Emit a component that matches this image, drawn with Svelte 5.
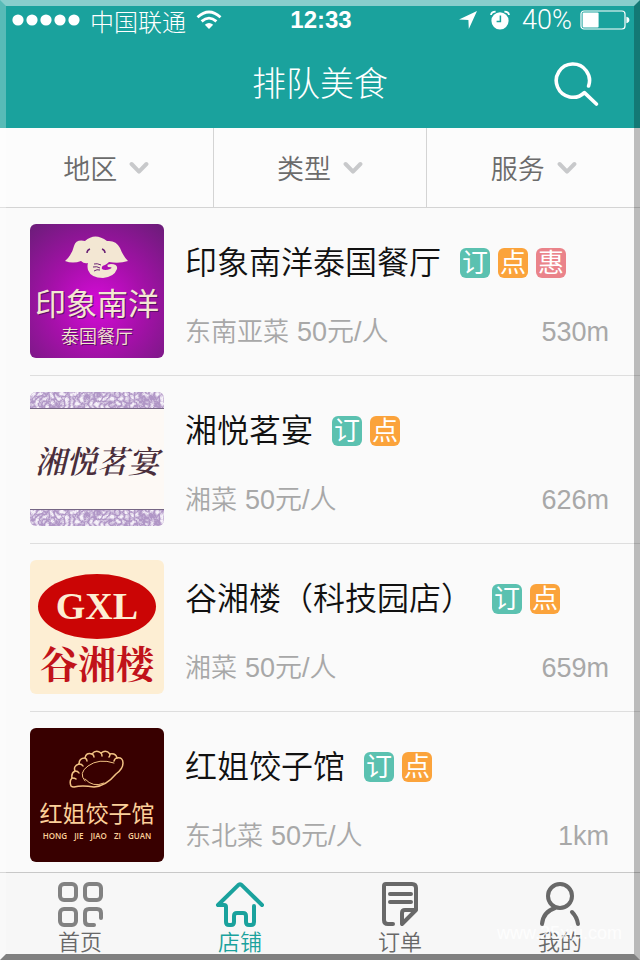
<script>
  const filters = ['地区', '类型', '服务'];

  const tagNames = { order: '订', menu: '点', deal: '惠' };

  const shops = [
    { logo: 'elephant', name: '印象南洋泰国餐厅', tags: ['order', 'menu', 'deal'], cuisine: '东南亚菜', price: 50, distance: '530m' },
    { logo: 'scroll', name: '湘悦茗宴', tags: ['order', 'menu'], cuisine: '湘菜', price: 50, distance: '626m' },
    { logo: 'gxl', name: '谷湘楼（科技园店）', tags: ['order', 'menu'], cuisine: '湘菜', price: 50, distance: '659m' },
    { logo: 'dumpling', name: '红姐饺子馆', tags: ['order', 'menu'], cuisine: '东北菜', price: 50, distance: '1km' }
  ];

  const tabs = [
    { id: 'home', label: '首页' },
    { id: 'shops', label: '店铺' },
    { id: 'orders', label: '订单' },
    { id: 'me', label: '我的' }
  ];

  let active = 'shops';
</script>

<div class="app">
  <header>
    <div class="status">
      <div class="carrier">
        <svg width="68" height="12" viewBox="0 0 68 12" fill="#fff">
          {#each [6, 20, 34, 48, 62] as cx}
            <circle {cx} cy="6" r="5.6" />
          {/each}
        </svg>
        <span>中国联通</span>
        <svg width="26" height="20" viewBox="0 0 26 20" fill="none" stroke="#fff" stroke-width="2.8">
          <path d="M1.5 7.2Q13-3.2 24.5 7.2M5.6 11.4Q13 4.8 20.4 11.4" />
          <path d="M8.8 14.8Q13 11 17.2 14.8L13 19Z" fill="#fff" stroke="none" />
        </svg>
      </div>
      <span class="time">12:33</span>
      <div class="power">
        <svg width="20" height="20" viewBox="0 0 20 20" fill="#fff">
          <path d="M19 1L1 9.4l9.4.6.4 9z" />
        </svg>
        <svg class="alarm" width="20" height="20" viewBox="0 0 20 20">
          <circle cx="10" cy="10.8" r="8.6" fill="#fff" />
          <path d="M1 5Q1.4 1.6 5.6 1.6M19 5Q18.6 1.6 14.4 1.6" fill="none" stroke="#fff" stroke-width="1.8" />
          <path d="M10.4 5.6v6H6.6" fill="none" stroke="#1aa29d" stroke-width="1.5" />
        </svg>
        <span>40%</span>
        <svg width="50" height="20" viewBox="0 0 50 20">
          <rect x="1" y="1" width="44" height="18" rx="3" fill="none" stroke="#fff" stroke-width="1.2" />
          <rect x="2.6" y="2.6" width="16" height="14.8" rx="1" fill="#fff" />
          <path d="M46.4 6.8q3 .6 3 3.2t-3 3.2z" fill="#fff" />
        </svg>
      </div>
    </div>
    <div class="bar">
      <h1>排队美食</h1>
      <button class="search" aria-label="搜索">
        <svg width="46" height="46" viewBox="0 0 46 46" fill="none" stroke="#fff" stroke-width="3.6" stroke-linecap="round" stroke-linejoin="round">
          <path d="M34.6 25A16.6 16.6 0 1 0 30.4 31.6L42.4 43" />
        </svg>
      </button>
    </div>
  </header>

  <div class="filters">
    {#each filters as filter}
      <button>
        {filter}
        <svg width="20" height="14" viewBox="0 0 20 14" fill="none" stroke="#c8c9cb" stroke-width="4" stroke-linecap="round" stroke-linejoin="round">
          <path d="M2.6 3L10 10.6L17.4 3" />
        </svg>
      </button>
    {/each}
  </div>

  <main>
    {#each shops as { logo, name, tags, cuisine, price, distance }}
      <article class="shop">
        <div class="logo {logo}">
          {#if logo === 'elephant'}
            <svg width="64" height="44" viewBox="0 0 64 44">
              <path
                d="M0 26Q7 20 9 11Q11 4 20 6Q30-3 42 6Q51 5 55 13Q58 21 63 26Q54 29 44 27Q42 29 40 30Q36 31 37 34Q40 36 45 34Q49 32 43 32Q41 29 46 29Q53 29 52 34Q49 42 38 43Q26 43 23 35Q22 31 23 28Q19 29 16 26Q8 29 0 26Z"
                fill="#f3e7d3"
              />
              <path d="M22 18q0-3 3-4M37 14q3 1 3 4" fill="none" stroke="#6b2375" stroke-width="1.5" />
              <path d="M29 29q3-1 7 1M28 32q4-1 7 1M29 36q3-2 6-1" fill="none" stroke="#6b2375" />
            </svg>
            <b>印象南洋</b>
            <small>泰国餐厅</small>
          {:else if logo === 'scroll'}
            <svg class="pattern">
              <filter id="brocade" x="0" y="0" width="100%" height="100%">
                <feTurbulence type="turbulence" baseFrequency="0.2" numOctaves="3" seed="4" />
                <feColorMatrix values="0 0 0 0 0.92  0 0 0 0 0.88  0 0 0 0 0.95  0 0 0 2.4 -0.4" />
              </filter>
              <rect width="100%" height="100%" fill="#b096c6" />
              <rect width="100%" height="100%" filter="url(#brocade)" />
            </svg>
            <b>湘悦茗宴</b>
            <svg class="pattern">
              <rect width="100%" height="100%" fill="#b096c6" />
              <rect width="100%" height="100%" filter="url(#brocade)" />
            </svg>
          {:else if logo === 'gxl'}
            <span>GXL</span>
            <b>谷湘楼</b>
          {:else}
            <svg width="58" height="42" viewBox="0 0 58 42" fill="none" stroke="#f1c183" stroke-width="1.5" stroke-linecap="round" stroke-linejoin="round">
              <path d="M3 37Q1 32 4 29Q3 24 7 22Q5 17 11 15Q11 9 17 9Q18 3 24 5Q28 0 33 4Q38 0 42 5Q48 4 49 9Q55 8 55 14Q55 20 48 25Q38 37 26 38Q14 36 6 38Q4 38 3 37Z" />
              <path d="M4 29q3 0 4 1M7 22q3 0 4 2M11 15q3 0 4 2M17 9q2 1 2 3M24 5q2 1 2 3M33 4q1 1 1 3M42 5q0 2-1 3M49 9q-2 0-3 3" />
              <path d="M17 32Q10 24 20 17Q31 9 46 14M17 30q8 9 19 4" stroke-width="1" />
            </svg>
            <b>红姐饺子馆</b>
            <small><i>HONG</i><i>JIE</i><i>JIAO</i><i>ZI</i><i>GUAN</i></small>
          {/if}
        </div>
        <div class="detail">
          <div class="title">
            <h2>{name}</h2>
            {#each tags as tag}
              <span class="tag {tag}">{tagNames[tag]}</span>
            {/each}
          </div>
          <div class="meta">
            <span class="cuisine">{cuisine}</span>
            <span>{price}元/人</span>
            <span class="distance">{distance}</span>
          </div>
        </div>
      </article>
    {/each}
  </main>

  <nav>
    {#each tabs as { id, label }}
      <button class:active={active === id} class={id} on:click={() => (active = id)}>
        <svg width="50" height="48" viewBox="0 0 50 48" fill="none" stroke="currentColor" stroke-width="4" stroke-linecap="round" stroke-linejoin="round">
          {#if id === 'home'}
            <rect x="5" y="3" width="16" height="16" rx="4" />
            <rect x="30" y="3" width="16" height="16" rx="4" />
            <rect x="5" y="28" width="16" height="16" rx="4" />
            <path d="M46 37v-5q0-4-4-4h-8q-4 0-4 4v8q0 4 4 4h5" />
          {:else if id === 'shops'}
            <path d="M47 24L27 4.4Q25 2 23 4.4L3 24H9Q11 24 11 26V41Q11 44 14 44H16Q19 44 19 41V35Q19 32 22 32H28Q31 32 31 35V41Q31 44 34 44H36Q39 44 39 41V25" />
          {:else if id === 'orders'}
            <path d="M18 43H13Q9 43 9 39V5Q9 3 11 3H37Q41 3 41 7V29L27 43V32Q27 29 30 29H41" />
            <path d="M15 13H36M15 21H36" />
          {:else}
            <circle cx="25" cy="15" r="12" />
            <path d="M7 43Q8 31 20 27M37 31Q42 36 43 43" />
          {/if}
        </svg>
        {label}
      </button>
    {/each}
  </nav>

  <span class="watermark">www.25xiu.com</span>
  <div class="bevel"></div>
</div>

<style>
  :global(body) {
    margin: 0;
  }
  .app {
    position: relative;
    display: flex;
    flex-direction: column;
    height: 100vh;
    overflow: hidden;
    background: #fafafa;
    font-family: 'Liberation Sans', 'Noto Sans CJK SC', sans-serif;
    font-weight: 350;
  }
  button {
    border: 0;
    padding: 0;
    background: none;
    font: inherit;
    cursor: pointer;
  }
  svg {
    display: block;
    flex: none;
  }
  h1,
  h2 {
    margin: 0;
    font-weight: 350;
  }

  header {
    flex: none;
    color: #fff;
    background: #1aa29d;
  }
  .status {
    display: grid;
    grid-template-columns: 1fr auto 1fr;
    align-items: center;
    height: 40px;
    padding: 0 10px 0 12px;
    font-size: 24px;
    font-weight: 300;
  }
  .carrier,
  .power {
    display: flex;
    align-items: center;
    gap: 10px;
  }
  .power {
    justify-content: flex-end;
    gap: 8px;
    font-family: Roboto, 'Liberation Sans', sans-serif;
    font-size: 27px;
  }
  .alarm {
    margin: 0 4px;
  }
  .time {
    font-weight: bold;
  }
  .bar {
    display: grid;
    grid-template-columns: 1fr auto 1fr;
    align-items: center;
    height: 88px;
    padding: 0 40px;
  }
  h1 {
    grid-column: 2;
    font-size: 34px;
    font-weight: 300;
    line-height: 40px;
  }
  .search {
    justify-self: end;
  }

  .filters {
    flex: none;
    display: flex;
    height: 79px;
    border-bottom: 1px solid #d4d4d4;
    background: #fcfcfc;
  }
  .filters button {
    flex: 1;
    display: flex;
    align-items: center;
    justify-content: center;
    gap: 12px;
    font-size: 27px;
    color: #6b6b6b;
  }
  .filters button + button {
    border-left: 1px solid #d4d4d4;
  }

  main {
    flex: 1;
    min-height: 0;
    overflow-y: auto;
    scrollbar-width: none;
  }
  .shop {
    display: flex;
    gap: 21px;
    height: 134px;
    margin-left: 30px;
    padding: 16px 31px 17px 0;
    border-bottom: 1px solid #dedede;
  }
  .detail {
    flex: 1;
    display: flex;
    flex-direction: column;
    justify-content: space-between;
    padding: 19px 0 10px;
  }
  .title {
    display: flex;
    align-items: center;
    gap: 8px;
  }
  h2 {
    margin-right: 11px;
    font-size: 32px;
    line-height: 40px;
    color: #111;
  }
  .tag {
    width: 30px;
    border-radius: 6px;
    font-size: 26px;
    font-weight: 400;
    line-height: 30px;
    text-align: center;
    color: #fff;
  }
  .order {
    background: #5bc1b0;
  }
  .menu {
    background: #fba33b;
  }
  .deal {
    background: #ea838a;
  }
  .meta {
    display: flex;
    gap: 8px;
    font-size: 27px;
    line-height: 32px;
    color: #a8a8a8;
  }
  .cuisine {
    font-size: 26px;
  }
  .distance {
    margin-left: auto;
  }

  .logo {
    flex: none;
    display: flex;
    flex-direction: column;
    align-items: center;
    box-sizing: border-box;
    width: 134px;
    height: 134px;
    border-radius: 6px;
    overflow: hidden;
    white-space: nowrap;
  }
  .elephant {
    padding-top: 11px;
    color: #f3e7d3;
    background: radial-gradient(circle at 50% 60%, #d60bd8, #a510a9 45%, #6a1d78);
  }
  .elephant b {
    margin-top: 6px;
    font-size: 31px;
    font-weight: 400;
    line-height: 40px;
    text-shadow: 1px 1px 0 #5f0f66;
  }
  .elephant small {
    font-size: 18px;
    line-height: 24px;
    text-shadow: 1px 1px 0 #5f0f66;
  }
  .scroll {
    justify-content: space-between;
    color: #4a2e3b;
    background: #fdf9f5;
  }
  .pattern {
    width: 100%;
    height: 16px;
    border: 0 solid #766684;
    border-bottom-width: 1px;
  }
  .pattern:last-child {
    border-width: 1px 0 0;
  }
  .scroll b {
    font-family: 'Noto Serif CJK SC', 'Noto Sans CJK SC', serif;
    font-size: 31px;
    font-style: italic;
    font-weight: 600;
  }
  .gxl {
    padding-top: 14px;
    color: #c1121a;
    background: #fdeed3;
  }
  .gxl span {
    width: 118px;
    border-radius: 50%;
    font-family: 'Liberation Serif', serif;
    font-size: 38px;
    font-weight: bold;
    line-height: 65px;
    text-align: center;
    color: #fdeed3;
    background: #cb0505;
  }
  .gxl b {
    font-family: 'Noto Serif CJK SC', 'Noto Sans CJK SC', serif;
    font-size: 38px;
    font-weight: 700;
    line-height: 46px;
  }
  .dumpling {
    padding-top: 21px;
    color: #fcd09a;
    background: #380000;
  }
  .dumpling b {
    margin-top: 6px;
    font-size: 23px;
    font-weight: 400;
    line-height: 34px;
  }
  .dumpling small {
    display: flex;
    gap: 7px;
    font-family: 'Open Sans', sans-serif;
    font-size: 8px;
    font-weight: 600;
    line-height: 10px;
  }
  .dumpling i {
    font-style: normal;
  }

  nav {
    flex: none;
    display: flex;
    height: 87px;
    border-top: 1px solid #c8c8c8;
    background: #f7f7f7;
  }
  nav button {
    flex: 1;
    display: flex;
    flex-direction: column;
    align-items: center;
    padding-top: 8px;
    font-size: 22px;
    line-height: 28px;
    color: #686868;
  }
  nav .home svg {
    color: #828282;
  }
  nav .active {
    color: #1aa29d;
  }

  .watermark {
    position: absolute;
    right: 18px;
    bottom: 16px;
    font-size: 18px;
    line-height: 22px;
    color: rgba(255, 255, 255, 0.8);
    pointer-events: none;
  }
  .bevel {
    position: absolute;
    inset: 0;
    border: 6px solid;
    border-color: rgba(255, 255, 255, 0.48) rgba(0, 0, 0, 0.25) rgba(0, 0, 0, 0.48) rgba(255, 255, 255, 0.27);
    pointer-events: none;
  }
</style>
